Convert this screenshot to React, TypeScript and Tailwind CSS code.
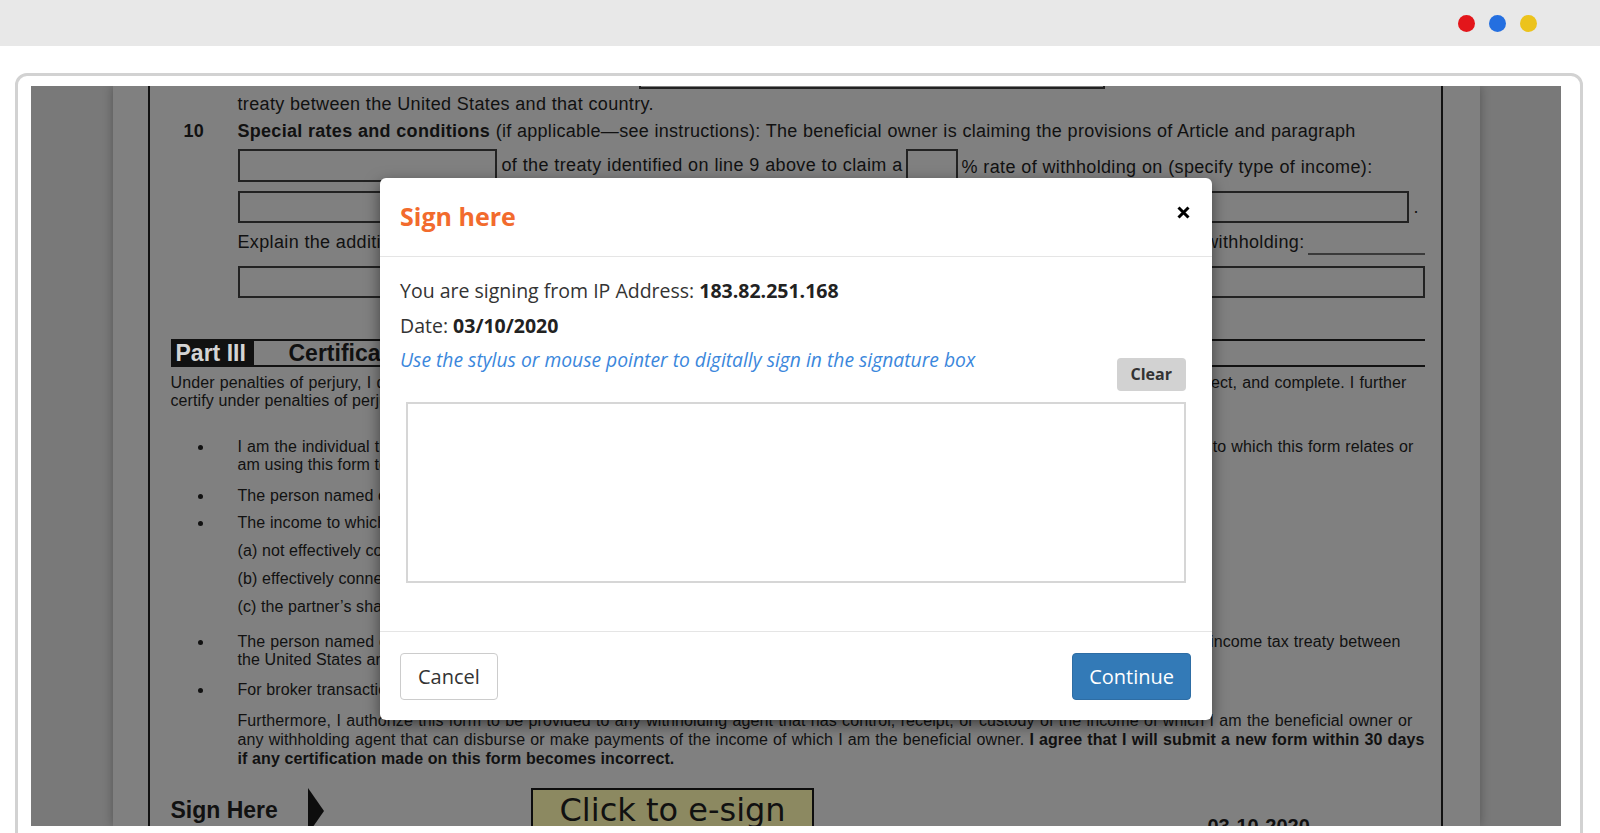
const J = "whitespace-nowrap text-justify [text-align-last:justify]";

function Bullet({ top, children }: { top: string; children: React.ReactNode }) {
  return (
    <div className={`flex ${top}`}>
      <div className="w-[67px] shrink-0 pl-[27px] pt-[7px]">
        <div className="h-[5px] w-[5px] rounded-full bg-[#111]" />
      </div>
      <div>{children}</div>
    </div>
  );
}

function Document() {
  return (
    <div className="mx-auto h-full w-[1367px] bg-[#808080] text-[#111] shadow-[0_0_10px_rgba(0,0,0,0.3)] font-['Liberation_Sans',Arial,sans-serif]">
      <div className="ml-[35px] mr-[37px] h-full border-x-2 border-[#111] pl-[21px] pr-[16px]">
        {/* bottom of the box above */}
        <div className="ml-[468px] h-[3px] w-[466px] border-x-2 border-b-2 border-[#222]" />

        <div className="mt-[2px] pl-[67px] text-[18px] leading-[27px] tracking-[0.35px]">
          treaty between the United States and that country.
        </div>
        <div className="flex text-[18px] leading-[26px] tracking-[0.28px]">
          <span className="w-[67px] shrink-0 pl-[13px] font-bold">10</span>
          <div className={`w-[1118px] ${J}`}>
            <b>Special rates and conditions</b> (if applicable—see instructions): The beneficial owner is claiming the provisions of Article and paragraph
          </div>
        </div>

        <div className="mt-[5px] flex h-[33px] pl-[67px] text-[18px] leading-[33px] tracking-[0.35px]">
          <div className="w-[259px] shrink-0 border-2 border-[#222]" />
          <div className={`ml-[5px] w-[401px] ${J}`}>of the treaty identified on line 9 above to claim a</div>
          <div className="ml-[3px] w-[52px] shrink-0 border-2 border-[#222]" />
          <div className={`ml-[4px] w-[411px] leading-[36px] ${J}`}>% rate of withholding on (specify type of income):</div>
        </div>

        <div className="mt-[9px] flex h-[32px] pl-[67px] text-[18px] leading-[32px]">
          <div className="w-[1171px] shrink-0 border-2 border-[#222]" />
          <span className="ml-[5px]">.</span>
        </div>

        <div className="mt-[6px] flex h-[26px] pl-[67px] text-[18px] leading-[26px] tracking-[0.35px]">
          <div className={`w-[1067px] shrink-0 ${J}`}>
            Explain the additional conditions in the Article and paragraph the beneficial owner meets to be eligible for the rate of withholding:
          </div>
          <div className="ml-[3px] flex-1 border-b-2 border-[#3a3a3a]" />
        </div>

        <div className="ml-[67px] mt-[11px] h-[32px] border-2 border-[#222]" />

        <div className="mt-[41px] flex h-[28px] text-[23px] font-bold">
          <div className="w-[83px] bg-[#111] pl-[5px] leading-[28px] text-[#d4d4d4]">Part III</div>
          <div className="flex-1 border-y-2 border-[#111] pl-[35px] leading-[24px]">Certification</div>
        </div>

        <div className="mt-[7px] text-[16px] leading-[18px] tracking-[0.1px]">
          <div className={`w-[1236px] ${J}`}>
            Under penalties of perjury, I declare that I have examined the information on this form and to the best of my knowledge and belief it is true, correct, and complete. I further
          </div>
          <div>certify under penalties of perjury that:</div>

          <Bullet top="mt-[28px]">
            <div className={`w-[1176px] ${J}`}>
              I am the individual that is the beneficial owner (or am authorized to sign for the individual that is the beneficial owner) of all the income to which this form relates or
            </div>
            <div>am using this form to document myself for chapter 4 purposes,</div>
          </Bullet>
          <Bullet top="mt-[13px]">
            <div>The person named on line 1 of this form is not a U.S. person,</div>
          </Bullet>
          <Bullet top="mt-[9px]">
            <div>The income to which this form relates is:</div>
          </Bullet>
          <div className="mt-[10px] pl-[67px]">(a) not effectively connected with the conduct of a trade or business in the United States,</div>
          <div className="mt-[10px] pl-[67px]">(b) effectively connected but is not subject to tax under an applicable income tax treaty, or</div>
          <div className="mt-[10px] pl-[67px]">(c) the partner’s share of a partnership’s effectively connected income,</div>
          <Bullet top="mt-[17px]">
            <div className={`w-[1163px] ${J}`}>
              The person named on line 1 of this form is a resident of the treaty country listed on line 9 of the form (if any) within the meaning of the income tax treaty between
            </div>
            <div>the United States and that country, and</div>
          </Bullet>
          <Bullet top="mt-[12px]">
            <div>For broker transactions or barter exchanges, the beneficial owner is an exempt foreign person as defined in the instructions.</div>
          </Bullet>

          <div className="mt-[12px] pl-[67px] leading-[19px]">
            <div className={`w-[1175px] ${J}`}>
              Furthermore, I authorize this form to be provided to any withholding agent that has control, receipt, or custody of the income of which I am the beneficial owner or
            </div>
            <div className={`w-[1187px] ${J}`}>
              any withholding agent that can disburse or make payments of the income of which I am the beneficial owner. <b>I agree that I will submit a new form within 30 days</b>
            </div>
            <div className="font-bold">if any certification made on this form becomes incorrect.</div>
          </div>
        </div>

        <div className="mt-[20px] flex items-start">
          <div className="mt-[4px] w-[137px] shrink-0 text-[23px] font-bold leading-[36px]">Sign Here</div>
          <svg width="16" height="46" viewBox="0 0 16 46" className="shrink-0">
            <polygon points="0,0 16,23 0,46" fill="#0d0d0d" />
          </svg>
          <div className="ml-[207px] h-[60px] w-[283px] shrink-0 border-2 border-[#0d0d0d] bg-[#8c8961] pl-[27px] pt-[4px] text-[32px] leading-[32px] font-['DejaVu_Sans',sans-serif]">
            Click to e-sign
          </div>
          <div className="ml-[394px] mt-[28px] text-[20px] font-bold leading-[20px]">03-10-2020</div>
        </div>
      </div>
    </div>
  );
}

function Modal() {
  return (
    <div className="absolute left-0 right-0 top-[92px] mx-auto w-[832px] rounded-[6px] bg-white text-[#333] shadow-[0_5px_15px_rgba(0,0,0,0.5)] font-['Open_Sans',sans-serif]">
      <div className="flex h-[79px] items-center justify-between border-b border-[#e5e5e5] pl-5 pr-[22px]">
        <h4 className="text-[25px] font-bold text-[#f26b2d]">Sign here</h4>
        <svg className="mb-[10px]" width="13" height="13" viewBox="0 0 13 13">
          <path d="M1.5 1.5L11.5 11.5M11.5 1.5L1.5 11.5" stroke="#000" strokeWidth="3" />
        </svg>
      </div>

      <div className="px-5 pb-[48px] pt-[17px] text-[19.5px] leading-[34.5px]">
        <p>
          You are signing from IP Address: <b className="text-[#222]">183.82.251.168</b>
        </p>
        <p>
          Date: <b className="text-[#222]">03/10/2020</b>
        </p>
        <div className="flex items-start">
          <p className="text-[19.3px] italic text-[#3b87dc]">
            Use the stylus or mouse pointer to digitally sign in the signature box
          </p>
          <button className="ml-auto mr-[6px] mt-[15px] h-[33px] rounded-[4px] bg-[#d2d2d2] px-[14px] text-[16px] font-bold leading-[33px] text-[#333]">
            Clear
          </button>
        </div>
        <div className="mx-[6px] mt-[11px] h-[181px] border-2 border-[#d6d6d6]" />
      </div>

      <div className="flex justify-between border-t border-[#e5e5e5] pb-5 pl-5 pr-[21px] pt-[21px]">
        <button className="h-[47px] rounded-[4px] border border-[#ccc] bg-white px-[17px] text-[20px] text-[#333]">
          Cancel
        </button>
        <button className="h-[47px] rounded-[4px] border border-[#2e6da4] bg-[#337ab7] px-[16px] text-[20px] text-white">
          Continue
        </button>
      </div>
    </div>
  );
}

export default function App() {
  return (
    <div className="h-[833px] overflow-hidden bg-white">
      <div className="flex h-[46px] items-center justify-end gap-[14px] bg-[#e8e8e8] pr-[63px]">
        <span className="h-[17px] w-[17px] rounded-full bg-[#e3161b]" />
        <span className="h-[17px] w-[17px] rounded-full bg-[#246fe0]" />
        <span className="h-[17px] w-[17px] rounded-full bg-[#ecc31c]" />
      </div>

      <div className="ml-[15px] mr-[17px] mt-[27px] h-[900px] rounded-[12px] border-[3px] border-[#d2d2d2] pl-[13px] pr-[19px] pt-[10px]">
        <div className="relative h-[740px] overflow-hidden bg-[#797979]">
          <Document />
          <Modal />
        </div>
      </div>
    </div>
  );
}
